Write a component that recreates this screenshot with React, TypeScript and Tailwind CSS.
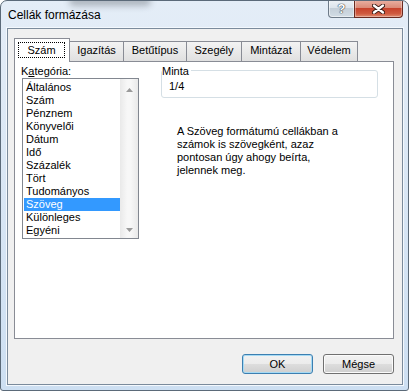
const categories = [
  'Általános',
  'Szám',
  'Pénznem',
  'Könyvelői',
  'Dátum',
  'Idő',
  'Százalék',
  'Tört',
  'Tudományos',
  'Szöveg',
  'Különleges',
  'Egyéni',
];

const tabs = [
  { label: 'Igazítás', w: 'w-[55px]' },
  { label: 'Betűtípus', w: 'w-[64px]' },
  { label: 'Szegély', w: 'w-[56px]' },
  { label: 'Mintázat', w: 'w-[60px]' },
  { label: 'Védelem', w: 'w-[58px]' },
];

const Arrow = ({ down }: { down?: boolean }) => (
  <svg width="7" height="4" viewBox="0 0 7 4">
    <polygon points={down ? '0,0 7,0 3.5,4' : '0,4 7,4 3.5,0'} fill="#9a9a9a" />
  </svg>
);

const DialogButton = ({ label, primary }: { label: string; primary?: boolean }) => (
  <button
    className={
      'w-[71px] h-[20px] rounded-[3px] border bg-[linear-gradient(#f2f2f2_0%,#ebebeb_50%,#dddddd_50%,#cfcfcf_100%)] text-[11px] leading-[13px] text-black ' +
      (primary
        ? 'border-[#3c7fb1] shadow-[inset_0_0_0_1px_#a6daf4]'
        : 'border-[#707070] shadow-[inset_0_0_0_1px_#fbfbfb]')
    }
  >
    {label}
  </button>
);

export default function App() {
  return (
    <div className="relative flex h-[391px] w-[409px] flex-col overflow-hidden rounded-t-[7px] rounded-b-[3px] border border-[#5b6a79] bg-[linear-gradient(#e4edf7,#cddff2)] pb-[5px] pl-[6px] pr-[5px] font-['Liberation_Sans',Arial,sans-serif] text-[11px] leading-[13px] text-black">
      {/* blurred background showing through the glass */}
      <div className="absolute left-[68px] top-[-5px] h-[10px] w-[82px] rounded-full bg-[#5f656c] opacity-40 blur-[3px]" />

      {/* title bar */}
      <div className="relative flex h-[27px] shrink-0 items-start">
        <div className="ml-px mt-[7px] text-[12px] leading-[15px]">Cellák formázása</div>
        <div className="-mt-px ml-auto flex">
          <div className="flex h-[18px] w-[27px] items-center justify-center rounded-bl-[4px] border border-t-0 border-[#6d7a88] bg-[linear-gradient(#eef2f6_0%,#dbe3eb_50%,#c4cfd9_50%,#d2dce5_100%)] shadow-[inset_0_0_0_1px_#ffffff80]">
            <span className="text-[13px] font-bold leading-[14px] text-white [text-shadow:0_0_1px_#3b4047,0_0_1px_#3b4047,0_0_1px_#3b4047]">
              ?
            </span>
          </div>
          <div className="-ml-px flex h-[18px] w-[49px] items-center justify-center rounded-br-[4px] border border-t-0 border-[#6a2a20] bg-[linear-gradient(#eab2a4_0%,#db8b78_45%,#c7432c_50%,#cf5a40_80%,#e08c70_100%)] shadow-[inset_0_0_0_1px_#ffffff55]">
            <svg width="13" height="10" viewBox="0 0 13 10">
              <path d="M2 1.5 L11 8.5 M11 1.5 L2 8.5" stroke="#3b1c16" strokeWidth="4.2" strokeLinecap="round" />
              <path d="M2 1.5 L11 8.5 M11 1.5 L2 8.5" stroke="#ffffff" strokeWidth="2.3" strokeLinecap="round" />
            </svg>
          </div>
        </div>
      </div>

      {/* client area */}
      <div className="flex flex-1 flex-col border border-[#7b8b9c] bg-[#f0f0f0] pt-[9px] shadow-[0_0_0_1px_#f3f8fd]">
        {/* tabs */}
        <div className="ml-[6px] flex h-[23px] items-end">
          <div className="relative z-10 -mb-px h-[24px] w-[56px] border border-b-0 border-[#898c95] bg-white pl-[3px] pt-[3px]">
            <div className="flex h-[16px] w-[47px] items-center justify-center border border-dotted border-black">
              Szám
            </div>
          </div>
          {tabs.map((t) => (
            <div
              key={t.label}
              className={
                '-ml-px h-[20px] border border-b-0 border-[#898c95] bg-[linear-gradient(#f3f3f3,#e0e0e0)] pt-[2px] text-center ' +
                t.w
              }
            >
              {t.label}
            </div>
          ))}
        </div>

        {/* tab panel */}
        <div className="ml-[6px] flex h-[278px] w-[380px] border border-[#898c95] bg-white">
          <div className="pl-[6px] pt-[3px]">
            <div>
              K<span className="underline">a</span>tegória:
            </div>
            <div className="ml-px flex h-[161px] w-[117px] border border-[#828790] bg-white">
              <div className="w-[97px] pl-px pt-[2px]">
                {categories.map((c) => (
                  <div
                    key={c}
                    className={'h-[13px] pl-[2px] ' + (c === 'Szöveg' ? 'bg-[#3399ff] text-white' : '')}
                  >
                    {c}
                  </div>
                ))}
              </div>
              <div className="flex w-[18px] flex-col items-center justify-between bg-[linear-gradient(90deg,#e9e9e9,#f7f7f7_40%,#f7f7f7_60%,#e9e9e9)] pb-[6px] pt-[9px]">
                <Arrow />
                <Arrow down />
              </div>
            </div>
          </div>

          <div className="ml-[22px] pt-[8px]">
            <div className="relative h-[28px] w-[217px] rounded-[3px] border border-[#d5dfe5] pl-[7px] pt-[9px]">
              <div className="absolute -top-[6px] left-0 bg-white pr-[2px]">Minta</div>
              1/4
            </div>
            <div className="ml-[16px] mt-[27px] whitespace-nowrap">
              A Szöveg formátumú cellákban a
              <br />
              számok is szövegként, azaz
              <br />
              pontosan úgy ahogy beírta,
              <br />
              jelennek meg.
            </div>
          </div>
        </div>

        {/* buttons */}
        <div className="mt-[15px] flex justify-end gap-[10px] pr-[8px]">
          <DialogButton label="OK" primary />
          <DialogButton label="Mégse" />
        </div>
      </div>
    </div>
  );
}
